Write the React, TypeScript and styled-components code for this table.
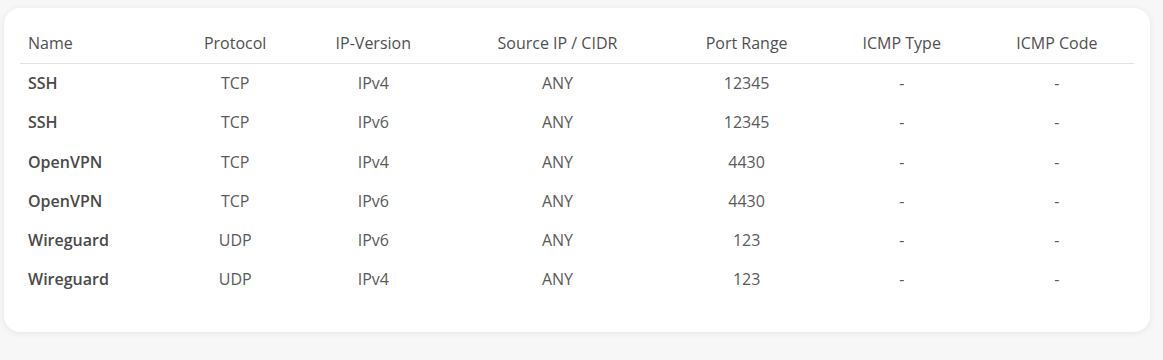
import styled, { createGlobalStyle } from 'styled-components';

//
//
//

const GlobalStyle = createGlobalStyle`
  html, body {
    margin: 0;
    padding: 0;
    background: #f7f7f7;
    font-family: 'Open Sans', 'Noto Sans', sans-serif;
  }
`;

const Page = styled.div`
  padding: 8px 13px 28px 4px;
`;
const Card = styled.div`
  background: #ffffff;
  border-radius: 16px;
  padding: 16px 16px 33px 16px;
  box-shadow: 0 1px 6px rgba(0, 0, 0, 0.08);
`;
const Table = styled.table`
  width: 100%;
  border-collapse: collapse;
  table-layout: fixed;
  font-size: 16px;
  color: #555555;
`;
const HeadCell = styled.th<{ $left?: boolean; $w: number }>`
  box-sizing: border-box;
  width: ${(p) => p.$w}px;
  height: 39px;
  padding: 0 8px;
  font-weight: 500;
  color: #505050;
  text-align: ${(p) => (p.$left ? 'left' : 'center')};
  border-bottom: 1px solid #e3e3e3;
  white-space: nowrap;
`;
const Cell = styled.td<{ $name?: boolean }>`
  height: 39.25px;
  padding: 0 8px;
  text-align: ${(p) => (p.$name ? 'left' : 'center')};
  font-weight: ${(p) => (p.$name ? 600 : 400)};
  color: ${(p) => (p.$name ? '#4a4a4a' : '#5a5a5a')};
`;

//
//
//

const columns = [
  { label: 'Name', w: 149, left: true },
  { label: 'Protocol', w: 132 },
  { label: 'IP-Version', w: 144 },
  { label: 'Source IP / CIDR', w: 224 },
  { label: 'Port Range', w: 154 },
  { label: 'ICMP Type', w: 156 },
  { label: 'ICMP Code', w: 154 },
];

const rules = [
  ['SSH', 'TCP', 'IPv4', 'ANY', '12345', '-', '-'],
  ['SSH', 'TCP', 'IPv6', 'ANY', '12345', '-', '-'],
  ['OpenVPN', 'TCP', 'IPv4', 'ANY', '4430', '-', '-'],
  ['OpenVPN', 'TCP', 'IPv6', 'ANY', '4430', '-', '-'],
  ['Wireguard', 'UDP', 'IPv6', 'ANY', '123', '-', '-'],
  ['Wireguard', 'UDP', 'IPv4', 'ANY', '123', '-', '-'],
];

const App = () => {
  return (
    <Page>
      <GlobalStyle />
      <Card>
        <Table>
          <thead>
            <tr>
              {columns.map((c) => (
                <HeadCell key={c.label} $w={c.w} $left={c.left}>
                  {c.label}
                </HeadCell>
              ))}
            </tr>
          </thead>
          <tbody>
            {rules.map((r, i) => (
              <tr key={i}>
                {r.map((v, j) => (
                  <Cell key={j} $name={j === 0}>
                    {v}
                  </Cell>
                ))}
              </tr>
            ))}
          </tbody>
        </Table>
      </Card>
    </Page>
  );
};

export default App;
